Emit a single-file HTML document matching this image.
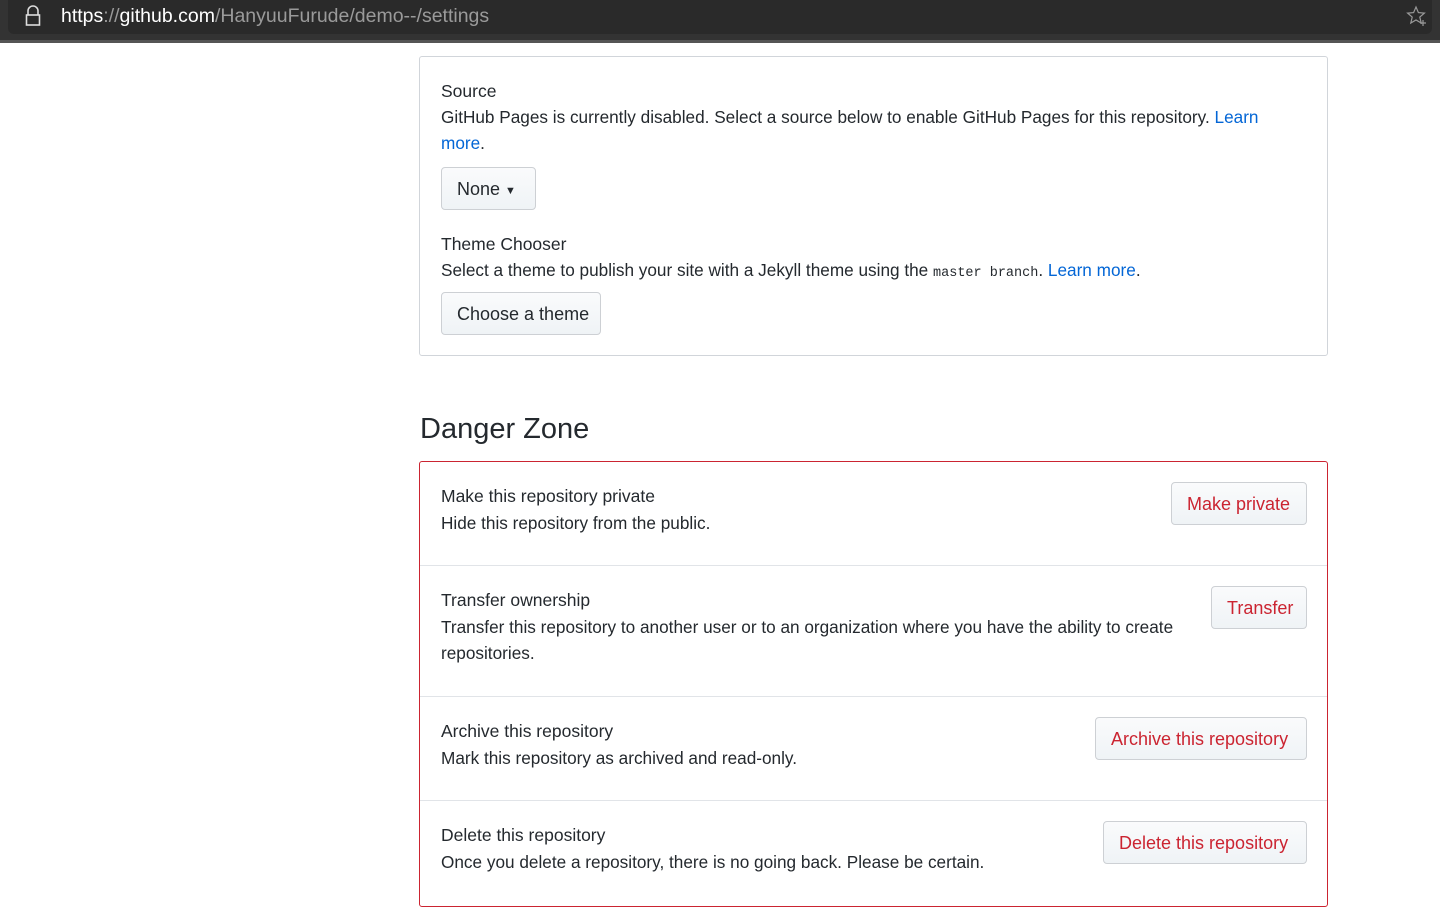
<!DOCTYPE html>
<html><head><meta charset="utf-8"><style>
*{box-sizing:border-box;margin:0;padding:0}
body{width:1440px;height:912px;overflow:hidden;background:#fff;font-family:"Liberation Sans",sans-serif;color:#24292e;font-size:17.2px;position:relative}
.bar{position:absolute;left:0;top:0;width:1440px;height:43px;background:#555}
.bar .in{position:absolute;left:0;top:0;width:1440px;height:40px;background:#333}
.bar .in2{position:absolute;left:8px;top:0;width:1424px;height:34px;background:#2a2a2a;border-radius:0 0 6px 6px}
.url{position:absolute;left:61px;top:5px;font-size:19.5px;color:#9a9a9a}
.url b{font-weight:normal;color:#fff}
.abs{position:absolute}
.box{position:absolute;left:419px;width:909px;border:1px solid #d1d5da;border-radius:3px}
.btn{position:absolute;height:43px;border:1px solid #cdd0d4;border-radius:4px;background:linear-gradient(#fafbfc,#eff3f6);font-size:18px;line-height:42px;padding:0 15px;color:#24292e;white-space:nowrap}
.red{color:#cb2431}
.t{position:absolute;left:21px;white-space:nowrap}
.h{font-size:17.5px}
a{color:#0366d6;text-decoration:none}
.row{position:absolute;left:0;width:907px;border-top:1px solid #e1e4e8}
code{font-family:"Liberation Mono",monospace;font-size:13.5px}
</style></head><body>
<div class="bar"><div class="in"></div><div class="in2"></div>
<svg class="abs" style="left:24px;top:5px" width="18" height="22" viewBox="0 0 18 22"><path d="M4 10V6a5 5 0 0 1 10 0v4" fill="none" stroke="#ddd" stroke-width="1.6"/><rect x="2.5" y="10" width="13" height="10" fill="none" stroke="#ddd" stroke-width="1.6"/></svg>
<div class="url"><b>https</b>://<b>github.com</b>/HanyuuFurude/demo--/settings</div>
<svg class="abs" style="left:1406px;top:5px" width="22" height="22" viewBox="0 0 22 22"><path d="M10 2l2.4 5.6 6 .5-4.6 4 1.4 5.9L10 15l-5.2 3 1.4-5.9-4.6-4 6-.5z" fill="none" stroke="#999" stroke-width="1.2"/><path d="M17 15v6M14 18h6" stroke="#999" stroke-width="1.2"/></svg>
</div>

<div class="box" style="top:56px;height:300px">
<div class="t h" style="top:24px">Source</div>
<div class="t" style="top:50px">GitHub Pages is currently disabled. Select a source below to enable GitHub Pages for this repository. <a>Learn</a></div>
<div class="t" style="top:76px"><a>more</a>.</div>
<div class="btn" style="left:21px;top:110px;width:95px">None <span style="font-size:11px;vertical-align:1px">&#9660;</span></div>
<div class="t h" style="top:177px">Theme Chooser</div>
<div class="t" style="top:203px">Select a theme to publish your site with a Jekyll theme using the <code>master branch</code>. <a>Learn more</a>.</div>
<div class="btn" style="left:21px;top:235px;width:160px">Choose a theme</div>
</div>

<div class="abs" style="left:420px;top:413px;font-size:29px">Danger Zone</div>

<div class="box" style="top:461px;height:446px;border-color:#cb2431">
<div class="t h" style="top:24px">Make this repository private</div>
<div class="t" style="top:51px">Hide this repository from the public.</div>
<div class="btn red" style="right:20px;top:20px;width:136px">Make private</div>
<div class="row" style="top:103px"></div>
<div class="t h" style="top:128px">Transfer ownership</div>
<div class="t" style="top:155px">Transfer this repository to another user or to an organization where you have the ability to create</div>
<div class="t" style="top:181px">repositories.</div>
<div class="btn red" style="right:20px;top:124px;width:96px">Transfer</div>
<div class="row" style="top:234px"></div>
<div class="t h" style="top:259px">Archive this repository</div>
<div class="t" style="top:286px">Mark this repository as archived and read-only.</div>
<div class="btn red" style="right:20px;top:255px;width:212px">Archive this repository</div>
<div class="row" style="top:338px"></div>
<div class="t h" style="top:363px">Delete this repository</div>
<div class="t" style="top:390px">Once you delete a repository, there is no going back. Please be certain.</div>
<div class="btn red" style="right:20px;top:359px;width:204px">Delete this repository</div>
</div>
</body></html>
